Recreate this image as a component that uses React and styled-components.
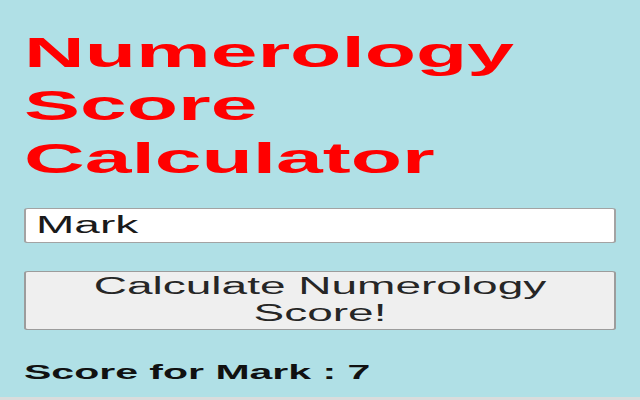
import styled, { createGlobalStyle } from "styled-components";

const GlobalStyle = createGlobalStyle`
  html, body {
    margin: 0;
    padding: 0;
    background: #d9dcdc;
    overflow: hidden;
  }
`;

// the popup is 320px wide; the shot shows it stretched to 640
const Popup = styled.div`
  width: 320px;
  height: 397px;
  box-sizing: border-box;
  padding: 26px 12px 0 12px;
  background: #b0e0e6;
  transform: scaleX(2);
  transform-origin: top left;
  font-family: "Liberation Sans", Arial, sans-serif;
`;

const Title = styled.h1`
  margin: 0 0 23px 0;
  color: #ff0000;
  font-size: 42px;
  line-height: 53px;
  font-weight: bold;
`;

const NameInput = styled.input`
  display: block;
  width: 100%;
  height: 35px;
  box-sizing: border-box;
  margin: 0;
  padding: 0 5px;
  border: 1px solid #a3a3a3;
  border-radius: 2px;
  background: #ffffff;
  color: #1a1a1a;
  font-family: inherit;
  font-size: 23px;
  outline: none;
`;

const CalcButton = styled.button`
  display: block;
  width: 100%;
  box-sizing: border-box;
  margin: 28px 0 0 0;
  padding: 1px 6px 2px 6px;
  border: 1px solid #9c9c9c;
  border-radius: 2px;
  background: #efefef;
  color: #262626;
  font-family: inherit;
  font-size: 23px;
  line-height: 27px;
  text-align: center;
`;

const Result = styled.p`
  margin: 30px 0 0 0;
  color: #111111;
  font-size: 20.5px;
  font-weight: bold;
`;

const App = () => {
  const name = "Mark";
  const score = 7;

  return (
    <>
      <GlobalStyle />
      <Popup>
        <Title>Numerology Score Calculator</Title>
        <NameInput type="text" defaultValue={name} />
        <CalcButton>Calculate Numerology Score!</CalcButton>
        <Result>
          Score for {name} : {score}
        </Result>
      </Popup>
    </>
  );
};

export default App;
